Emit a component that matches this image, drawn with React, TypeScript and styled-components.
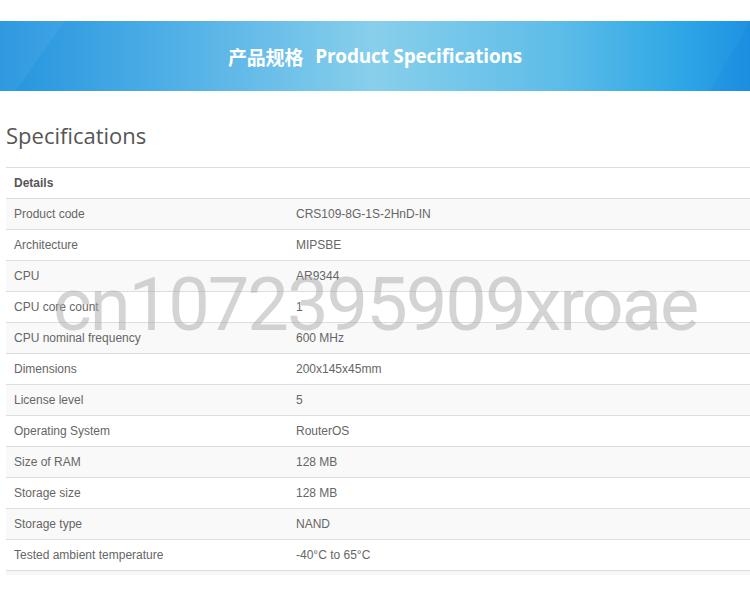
import { createGlobalStyle, styled } from "styled-components";

const specs: [string, string][] = [
	["Product code", "CRS109-8G-1S-2HnD-IN"],
	["Architecture", "MIPSBE"],
	["CPU", "AR9344"],
	["CPU core count", "1"],
	["CPU nominal frequency", "600 MHz"],
	["Dimensions", "200x145x45mm"],
	["License level", "5"],
	["Operating System", "RouterOS"],
	["Size of RAM", "128 MB"],
	["Storage size", "128 MB"],
	["Storage type", "NAND"],
	["Tested ambient temperature", "-40°C to 65°C"],
];

export default function App() {
	return (
		<>
			<GlobalStyle />
			<Page>
				<Banner>
					<BannerTitle>
						<span>产品规格</span>
						<span>Product Specifications</span>
					</BannerTitle>
				</Banner>
				<Heading>Specifications</Heading>
				<Table>
					<HeadRow>Details</HeadRow>
					{specs.map(([label, value], i) => (
						<Row key={label} $shaded={i % 2 === 0}>
							<Label>{label}</Label>
							<Value>{value}</Value>
						</Row>
					))}
					<Footer />
				</Table>
				<Watermark>cn1072395909xroae</Watermark>
			</Page>
		</>
	);
}

const GlobalStyle = createGlobalStyle`
	html, body {
		margin: 0;
		padding: 0;
		background: #fff;
	}
`;

const Page = styled.div`
	position: relative;
	width: 750px;
	height: 608px;
	overflow: hidden;
	padding-top: 21px;
	box-sizing: border-box;
`;

const Banner = styled.div`
	position: relative;
	height: 70px;
	display: flex;
	align-items: center;
	justify-content: center;
	overflow: hidden;
	background: linear-gradient(
		90deg,
		#2494de 0%,
		#4eaee6 22%,
		#88cfeb 50%,
		#5dbce8 75%,
		#30a8e6 90%,
		#1e92e2 100%
	);

	// faint diagonal panels like the original artwork
	&::before {
		content: "";
		position: absolute;
		inset: 0;
		background: linear-gradient(
			125deg,
			rgba(255, 255, 255, 0.05) 0%,
			rgba(255, 255, 255, 0.05) 8%,
			rgba(255, 255, 255, 0) 8.2%
		);
	}

	&::after {
		content: "";
		position: absolute;
		inset: 0;
		background: linear-gradient(
			-60deg,
			rgba(0, 90, 200, 0.08) 0%,
			rgba(0, 90, 200, 0.08) 5%,
			rgba(0, 90, 200, 0) 5.2%
		);
	}
`;

const BannerTitle = styled.h1`
	position: relative;
	z-index: 1;
	margin: 0;
	display: flex;
	gap: 12px;
	color: #fff;
	font-family: "Open Sans", "Noto Sans CJK SC", sans-serif;
	font-size: 19px;
	font-weight: 700;
	letter-spacing: -0.2px;
	transform: translateY(1px);
`;

const Heading = styled.h2`
	margin: 29px 0 0 6px;
	height: 47px;
	font-family: "Open Sans", sans-serif;
	font-size: 22px;
	font-weight: 400;
	line-height: 30px;
	color: #555;
`;

const Table = styled.div`
	margin-left: 6px;
	border-top: 1px solid #ddd;
	font-family: "Liberation Sans", Arial, sans-serif;
	font-size: 12px;
	color: #666;
`;

const HeadRow = styled.div`
	height: 30px;
	line-height: 30px;
	padding-left: 8px;
	border-bottom: 1px solid #ddd;
	font-weight: 700;
	color: #555;
`;

const Row = styled.div<{ $shaded: boolean }>`
	display: grid;
	grid-template-columns: 290px 1fr;
	height: 30px;
	line-height: 30px;
	border-bottom: 1px solid #ddd;
	background: ${(p) => (p.$shaded ? "#f9f9f9" : "#fff")};
`;

const Label = styled.div`
	padding-left: 8px;
`;

const Value = styled.div``;

const Footer = styled.div`
	height: 4px;
	background: #f7f7f7;
`;

const Watermark = styled.div`
	position: absolute;
	left: 53px;
	top: 268px;
	font-family: Roboto, "Liberation Sans", sans-serif;
	font-size: 74px;
	font-weight: 400;
	letter-spacing: -2px;
	line-height: 1;
	color: rgba(170, 170, 170, 0.5);
	pointer-events: none;
	white-space: nowrap;
`;
